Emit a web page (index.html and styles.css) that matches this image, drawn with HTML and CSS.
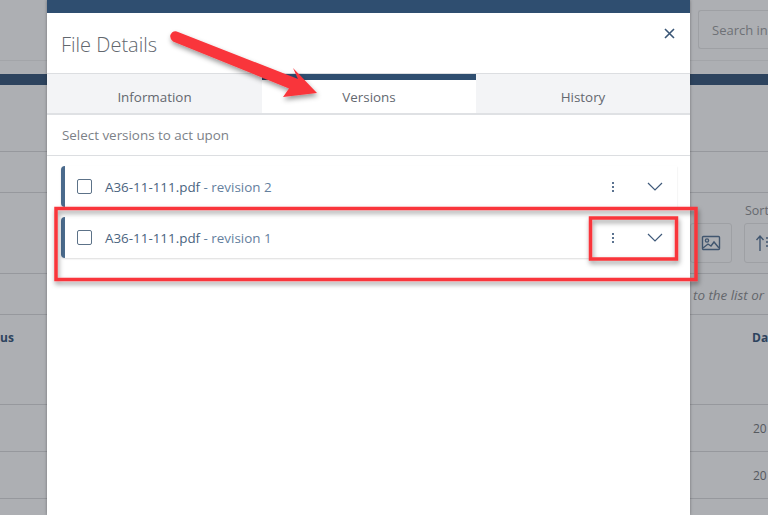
FILE: index.html
```html
<!DOCTYPE html>
<html lang="en">
<head>
    <meta charset="UTF-8">
    <meta name="viewport" content="width=device-width, initial-scale=1.0">
    <title>File Details</title>
    <link rel="stylesheet" href="styles.css">
</head>
<body>
    <!-- dimmed page behind the modal -->
    <div class="page">
        <div class="topbar">
            <div class="search">Search in</div>
        </div>
        <div class="band"></div>
        <div class="row row-title"></div>
        <div class="row row-sub"></div>
        <div class="row row-tools">
            <div class="sort">
                <span class="sort-label">Sort</span>
                <div class="tool-buttons">
                    <div class="tool-btn">
                        <svg width="20" height="16" viewBox="0 0 20 16" fill="none" stroke="#41566f" stroke-width="1.4">
                            <rect x="1.5" y="1.5" width="17" height="13" rx="1"/>
                            <circle cx="6" cy="5.5" r="1.6"/>
                            <path d="M2 13l5-4 3 2 3-4 5 6"/>
                        </svg>
                    </div>
                    <div class="tool-btn">
                        <svg width="20" height="18" viewBox="0 0 20 18" fill="none" stroke="#41566f" stroke-width="1.4">
                            <path d="M5 17V2M1.500 6L5 2l3.500 4M11 4h9M11 8h9M11 12h9"/>
                        </svg>
                    </div>
                </div>
            </div>
        </div>
        <div class="row row-hint"><em>to the list or</em></div>
        <div class="row row-head"><span>us</span><span>Da</span></div>
        <div class="row row-cell"><span></span><span>20</span></div>
        <div class="row row-cell"><span></span><span>20</span></div>
    </div>

    <div class="modal">
        <div class="modal-head">
            <h1>File Details</h1>
            <svg class="close" width="11" height="11" viewBox="0 0 11 11" stroke="#3a5676" stroke-width="1.6">
                <path d="M1 1l9 9M10 1l-9 9"/>
            </svg>
        </div>
        <div class="tabs">
            <div class="tab">Information</div>
            <div class="tab active">Versions</div>
            <div class="tab">History</div>
        </div>
        <div class="hint">Select versions to act upon</div>
        <div class="versions">
            <div class="version">
                <span class="check"></span>
                <span class="name">A36-11-111.pdf <span class="rev">- revision 2</span></span>
                <span class="dots"><i></i><i></i><i></i></span>
                <svg class="chev" width="16" height="9" viewBox="0 0 16 9" fill="none" stroke="#3f5a7a" stroke-width="1.2">
                    <path d="M1 1l7 7 7-7"/>
                </svg>
            </div>
            <div class="version">
                <span class="check"></span>
                <span class="name">A36-11-111.pdf <span class="rev">- revision 1</span></span>
                <span class="dots"><i></i><i></i><i></i></span>
                <svg class="chev" width="16" height="9" viewBox="0 0 16 9" fill="none" stroke="#3f5a7a" stroke-width="1.2">
                    <path d="M1 1l7 7 7-7"/>
                </svg>
            </div>
        </div>
    </div>

    <!-- red annotations drawn on top of the screenshot -->
    <svg class="notes" width="768" height="515" viewBox="0 0 768 515">
        <defs>
            <filter id="shadow" x="-10%" y="-10%" width="120%" height="130%">
                <feDropShadow dx="1" dy="3" stdDeviation="2.500" flood-color="#000" flood-opacity="0.4"/>
            </filter>
        </defs>
        <g filter="url(#shadow)">
            <rect x="56" y="208.500" width="640" height="71" fill="none" stroke="#f9353b" stroke-width="3.500"/>
            <rect x="590.500" y="218" width="86" height="41" fill="none" stroke="#f9353b" stroke-width="3.500"/>
            <path d="M172 32.500Q175 30.500 178 32L298 79 293 68 317 93 283 97 289 88.500 173 41.500Q168 37 172 32.500z" fill="#f9353b"/>
        </g>
    </svg>
</body>
</html>
```

FILE: styles.css
```css
* {
    box-sizing: border-box;
}

html, body {
    height: 100%;
}

body {
    margin: 0;
    overflow: hidden;
    background: #adafb3;
    font-family: 'Open Sans', sans-serif;
    color: #5f646b;
}

/* page behind the modal */
.page {
    width: 768px;
    height: 515px;
    overflow: hidden;
}

.topbar {
    height: 61px;
    padding: 10px 0 0 698px;
    border-bottom: 1px solid #a3a5a9;
}

.search {
    width: 70px;
    height: 39px;
    padding: 0 0 0 13px;
    line-height: 38px;
    font-size: 13px;
    white-space: nowrap;
    color: #6e7176;
    border: 1px solid #9ea0a4;
    border-right: 0;
    border-radius: 3px 0 0 3px;
}

.band {
    height: 11px;
    margin-top: 13px;
    background: #2d435e;
}

.row {
    display: flex;
    justify-content: space-between;
    border-bottom: 1px solid #96989d;
}

.row-title {
    height: 67px;
}

.row-sub {
    height: 41px;
}

.row-tools {
    height: 81px;
    padding: 10px 0 0 690px;
}

.sort {
    display: flex;
    flex-direction: column;
}

.sort-label {
    margin: 0 0 4px 55px;
    font-size: 12.500px;
    line-height: 16px;
    color: #66696f;
}

.tool-buttons {
    display: flex;
    gap: 12px;
}

.tool-btn {
    display: flex;
    align-items: center;
    justify-content: center;
    flex: none;
    width: 42px;
    height: 40px;
    border: 1px solid #9ea0a4;
    border-radius: 3px;
}

.row-hint {
    height: 41px;
    padding: 12px 0 0 693px;
    font-size: 13.400px;
    line-height: 18px;
    color: #63666b;
    white-space: nowrap;
}

.row-head {
    height: 90px;
    padding-top: 14px;
    font-size: 12px;
    font-weight: 700;
    line-height: 18px;
    color: #2d435e;
}

.row-head span:last-child {
    width: 16px;
    white-space: nowrap;
}

.row-cell {
    height: 47px;
    padding-top: 15px;
    font-size: 12px;
    line-height: 18px;
    color: #56595f;
}

.row-cell span:last-child {
    width: 15px;
}

/* modal */
.modal {
    position: absolute;
    top: 0;
    left: 47px;
    width: 643px;
    height: 515px;
    background: #fff;
    border-top: 13px solid #2f4e70;
    box-shadow: 0 0 3px rgba(0, 0, 0, 0.35);
}

.modal-head {
    display: flex;
    justify-content: space-between;
    height: 61px;
    padding: 16px 15px 0 14px;
    border-bottom: 1px solid #dcdee1;
}

.modal-head h1 {
    margin: 0;
    font-size: 20px;
    font-weight: 300;
    line-height: 32px;
    color: #62676e;
}

.close {
    margin-top: -1px;
}

.tabs {
    display: grid;
    grid-template-columns: 215px 214px 214px;
    height: 41px;
    border-bottom: 2px solid #dfe1e4;
}

.tab {
    padding-top: 7px;
    background: #f3f4f6;
    text-align: center;
    font-size: 13.400px;
    line-height: 32px;
    color: #63686f;
}

.tab.active {
    background: #fff;
    border-top: 6px solid #2f4e70;
    padding-top: 1px;
}

.hint {
    height: 41px;
    padding: 11px 15px 0;
    border-bottom: 1px solid #dcdee1;
    font-size: 13.400px;
    line-height: 19px;
    color: #7c8187;
}

.versions {
    display: flex;
    flex-direction: column;
    gap: 10px;
    padding: 10px 13px 0 14px;
}

.version {
    display: flex;
    align-items: center;
    height: 41px;
    padding-left: 12px;
    background: #fff;
    border-left: 4px solid #4a6a8c;
    border-radius: 4px 0 0 4px;
    box-shadow: 0 1px 2px rgba(0, 0, 0, 0.14);
}

.check {
    flex: none;
    width: 15px;
    height: 15px;
    margin-right: 13px;
    border: 1.500px solid #5c7288;
    border-radius: 2px;
}

.name {
    flex: 1;
    font-size: 13.400px;
    line-height: 18px;
    color: #4a6480;
}

.rev {
    color: #64809e;
}

.dots {
    display: flex;
    flex-direction: column;
    gap: 2px;
    margin-right: 33px;
}

.dots i {
    display: block;
    width: 2px;
    height: 2px;
    background: #5b7390;
}

.chev {
    margin-right: 14px;
}

/* annotations */
.notes {
    position: absolute;
    top: 0;
    left: 0;
    pointer-events: none;
}
```
